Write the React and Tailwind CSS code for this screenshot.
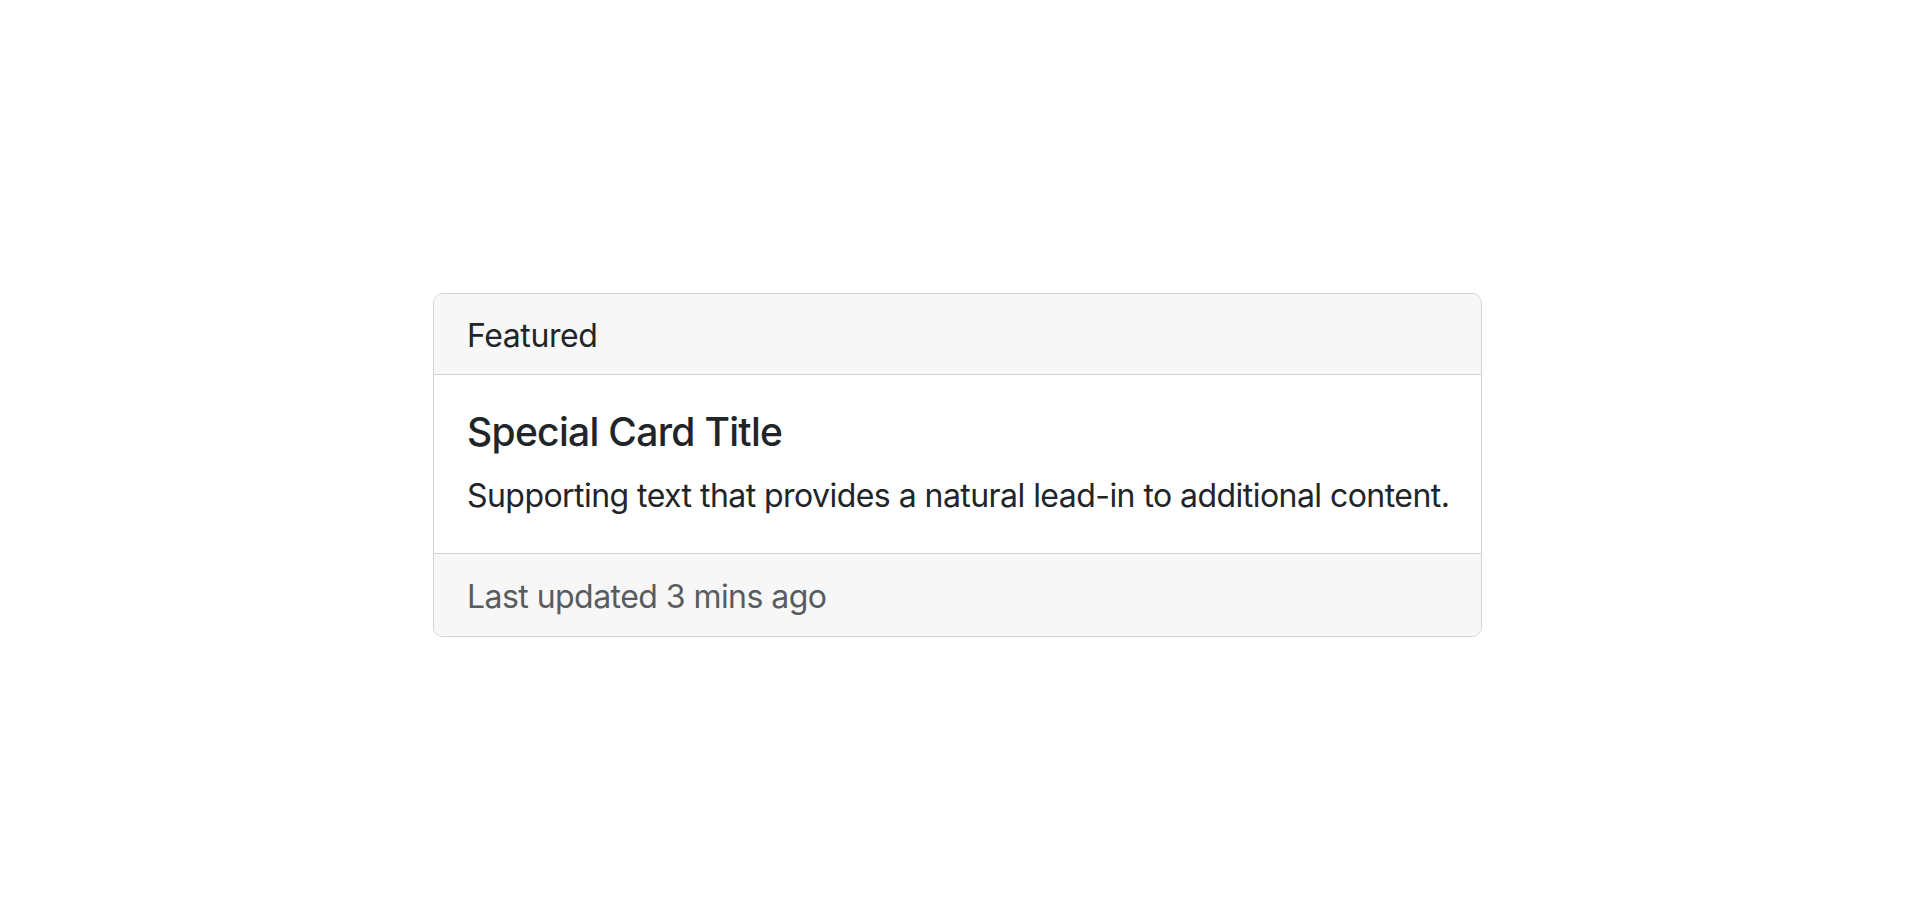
export default function App() {
  return (
    <div className="min-h-screen bg-white pt-[293px] pl-[433px]" style={{ fontFamily: 'Inter, "Noto Sans", sans-serif' }}>
      <div className="w-[1049px] border border-[#d3d3d3] rounded-[10px] overflow-hidden text-[#212529]">
        <div className="h-[81px] px-[33px] pt-[3px] flex items-center bg-[#f7f7f7] border-b border-[#d3d3d3] text-[32px] leading-[48px] tracking-[-0.4px]">
          Featured
        </div>
        <div className="px-[33px] pt-[33px] pb-[33px] whitespace-nowrap">
          <h5 className="text-[39px] leading-[48px] font-medium mb-[16px] tracking-[-0.7px]">Special Card Title</h5>
          <p className="text-[32px] leading-[48px] tracking-[-0.55px]">Supporting text that provides a natural lead-in to additional content.</p>
        </div>
        <div className="h-[83px] px-[33px] pt-[3px] flex items-center bg-[#f7f7f7] border-t border-[#d3d3d3] text-[32px] leading-[48px] tracking-[-0.55px] text-[#595c5f]">
          Last updated 3 mins ago
        </div>
      </div>
    </div>
  );
}
